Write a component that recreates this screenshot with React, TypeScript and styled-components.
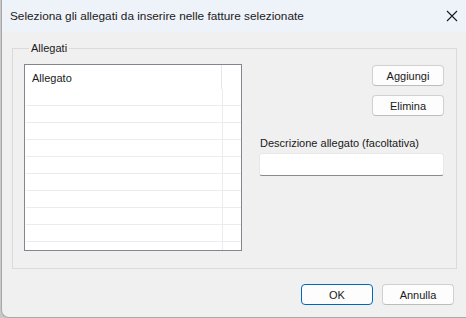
import React from 'react';
import styled, { createGlobalStyle } from 'styled-components';

const GlobalStyle = createGlobalStyle`
  html, body {
    margin: 0;
    padding: 0;
    background: #c8c8c8;
  }
  body {
    font-family: "Liberation Sans", Arial, sans-serif;
    font-size: 11px;
    color: #1a1a1a;
  }
`;

const Page = styled.div`
  width: 466px;
  height: 318px;
  padding-left: 1px;
  box-sizing: border-box;
  overflow: hidden;
`;

const Window = styled.div`
  width: 465px;
  height: 318px;
  box-sizing: border-box;
  border-left: 1px solid #a8a8a8;
  border-bottom: 1px solid #a8a8a8;
  border-bottom-left-radius: 8px;
  background: #f0f0f0;
  display: flex;
  flex-direction: column;
  overflow: hidden;
`;

const TitleBar = styled.div`
  height: 32px;
  flex: none;
  display: flex;
  align-items: center;
  justify-content: space-between;
  padding: 0 7px 0 8px;
  background: #eef2f9;
`;

const Title = styled.span`
  font-size: 11.8px;
  line-height: 16px;
  margin-top: -1px;
`;

const CloseButton = styled.div`
  width: 14px;
  height: 14px;
  display: flex;
  align-items: center;
  justify-content: center;
  margin-top: -1px;
`;

const Body = styled.div`
  flex: 1;
  display: flex;
  flex-direction: column;
  padding: 8px 9px 0 10px;
`;

const GroupBox = styled.fieldset`
  margin: 0;
  padding: 8px 11px 16px 11px;
  border: 1px solid #dadada;
  height: 229px;
  box-sizing: border-box;
  display: flex;
  gap: 17px;
  min-width: 0;
`;

const Legend = styled.legend`
  padding: 0 2px;
  margin-left: 5px;
  line-height: 16px;
`;

const ListBox = styled.div`
  width: 218px;
  height: 187px;
  box-sizing: border-box;
  border: 1px solid #85858f;
  background: #ffffff;
  display: flex;
  flex-direction: column;
  overflow: hidden;
`;

const HeaderRow = styled.div`
  height: 24px;
  flex: none;
  display: grid;
  grid-template-columns: 197px 1fr;
`;

const HeaderCell = styled.div<{ $divider?: boolean }>`
  padding: 3px 0 0 7px;
  line-height: 21px;
  border-right: ${(p) => (p.$divider ? '1px solid #e6e6e6' : 'none')};
`;

const Row = styled.div`
  height: 17px;
  flex: none;
  box-sizing: border-box;
  margin-left: 1px;
  border-bottom: 1px solid #ececec;
  display: grid;
  grid-template-columns: 197px 1fr;
`;

const RowCell = styled.div<{ $divider?: boolean }>`
  border-right: ${(p) => (p.$divider ? '1px solid #ececec' : 'none')};
`;

const Filler = styled.div`
  flex: 1;
  margin-left: 1px;
  display: grid;
  grid-template-columns: 197px 1fr;
`;

const SidePanel = styled.div`
  flex: 1;
  display: flex;
  flex-direction: column;
  padding-top: 1px;
  padding-right: 1px;
`;

const ButtonStack = styled.div`
  display: flex;
  flex-direction: column;
  align-items: flex-end;
  gap: 9px;
`;

const Button = styled.button<{ $primary?: boolean }>`
  width: 72px;
  height: 21px;
  box-sizing: border-box;
  padding: 0;
  font-family: inherit;
  font-size: 11px;
  color: #1a1a1a;
  background: #fdfdfd;
  border: 1px solid ${(p) => (p.$primary ? '#0067c0' : '#d0d0d0')};
  border-bottom-color: ${(p) => (p.$primary ? '#0067c0' : '#bdbdbd')};
  border-radius: 4px;
  line-height: 18px;
`;

const FieldLabel = styled.div`
  margin-top: 19px;
  margin-left: 1px;
  line-height: 16px;
`;

const TextInput = styled.div`
  margin-top: 2px;
  height: 23px;
  box-sizing: border-box;
  background: #ffffff;
  border: 1px solid #e8e8e8;
  border-bottom: 1px solid #8a8a8a;
  border-radius: 3px;
`;

const Footer = styled.div`
  display: flex;
  justify-content: flex-end;
  gap: 9px;
  padding: 15px 3px 0 0;
`;

const CloseIcon = () => (
  <svg width="12" height="12" viewBox="0 0 12 12">
    <path d="M1 1 L11 11 M11 1 L1 11" stroke="#1a1a1a" strokeWidth="1.1" fill="none" />
  </svg>
);

const App: React.FC = () => {
  const rows = Array.from({ length: 9 });

  return (
    <>
      <GlobalStyle />
      <Page>
        <Window>
          <TitleBar>
            <Title>Seleziona gli allegati da inserire nelle fatture selezionate</Title>
            <CloseButton>
              <CloseIcon />
            </CloseButton>
          </TitleBar>
          <Body>
            <GroupBox>
              <Legend>Allegati</Legend>
              <ListBox>
                <HeaderRow>
                  <HeaderCell $divider>Allegato</HeaderCell>
                  <HeaderCell />
                </HeaderRow>
                {rows.map((_, i) => (
                  <Row key={i}>
                    <RowCell $divider />
                    <RowCell />
                  </Row>
                ))}
                <Filler>
                  <RowCell $divider />
                  <RowCell />
                </Filler>
              </ListBox>
              <SidePanel>
                <ButtonStack>
                  <Button>Aggiungi</Button>
                  <Button>Elimina</Button>
                </ButtonStack>
                <FieldLabel>Descrizione allegato (facoltativa)</FieldLabel>
                <TextInput />
              </SidePanel>
            </GroupBox>
            <Footer>
              <Button $primary>OK</Button>
              <Button>Annulla</Button>
            </Footer>
          </Body>
        </Window>
      </Page>
    </>
  );
};

export default App;
